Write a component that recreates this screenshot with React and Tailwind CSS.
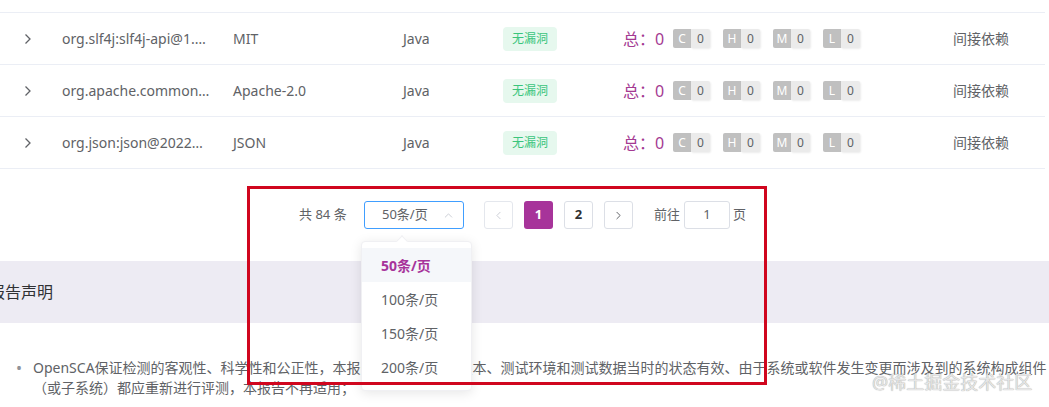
import { ChevronLeft, ChevronRight, ChevronUp } from 'lucide-react';

const rows = [
  { name: 'org.slf4j:slf4j-api@1.…', license: 'MIT' },
  { name: 'org.apache.common…', license: 'Apache-2.0' },
  { name: 'org.json:json@2022…', license: 'JSON' },
];

const sizes = ['50条/页', '100条/页', '150条/页', '200条/页'];

function RowChevron() {
  return (
    <svg width="8" height="12" viewBox="0 0 8 12" fill="none">
      <path d="M1.5 1.5 L6 6 L1.5 10.5" stroke="#606266" strokeWidth="1.3" />
    </svg>
  );
}

function SevBadge({ letter }) {
  return (
    <span className="flex h-[19px] items-center">
      <span className="flex h-full w-[18px] items-center justify-center rounded-l-[2px] bg-[#c0c0c0] text-[12px] text-white">
        {letter}
      </span>
      <span className="flex h-full w-[19px] items-center justify-center rounded-r-[2px] bg-[#ebebeb] text-[12px] text-[#606266] shadow-[1px_1px_2px_rgba(0,0,0,0.08)]">
        0
      </span>
    </span>
  );
}

export default function App() {
  return (
    <div className="relative h-[407px] w-[1049px] overflow-hidden bg-white font-['Noto_Sans','Noto_Sans_CJK_SC',sans-serif] text-[#606266]">
      {/* table rows */}
      <div className="mt-[12px] w-[1045px] border-t border-[#ebeef5]">
        {rows.map((r) => (
          <div key={r.name} className="flex h-[52px] items-center border-b border-[#ebeef5] text-[14px]">
            <div className="w-[62px] pl-[24px]">
              <RowChevron />
            </div>
            <div className="w-[171px] whitespace-nowrap">{r.name}</div>
            <div className="w-[170px]">{r.license}</div>
            <div className="w-[100px]">Java</div>
            <div className="w-[120px]">
              <span className="flex h-[24px] w-[54px] items-center justify-center rounded-[4px] bg-[#e6f8ee] text-[12px] text-[#3ac57c]">
                无漏洞
              </span>
            </div>
            <div className="flex w-[330px] items-center">
              <span className="w-[50px] text-[16px] text-[#a43a92]">总：0</span>
              <div className="flex items-center gap-[13px]">
                <SevBadge letter="C" />
                <SevBadge letter="H" />
                <SevBadge letter="M" />
                <SevBadge letter="L" />
              </div>
            </div>
            <div>间接依赖</div>
          </div>
        ))}
      </div>

      {/* pagination */}
      <div className="mt-[32px] flex h-[28px] items-center pl-[299px] text-[13px]">
        <span className="w-[65px]">共 84 条</span>
        <div className="flex h-[28px] w-[100px] items-center justify-between rounded-[3px] border border-[#409eff] pl-[17px] pr-[8px] text-[13px]">
          <span>50条/页</span>
          <ChevronUp size={13} color="#c0c4cc" strokeWidth={1.5} />
        </div>
        <div className="ml-[20px] flex items-center gap-[11px]">
          <div className="flex h-[28px] w-[29px] items-center justify-center rounded-[3px] border border-[#e4e7ed]">
            <ChevronLeft size={13} color="#c0c4cc" strokeWidth={1.5} />
          </div>
          <div className="flex h-[28px] w-[29px] items-center justify-center rounded-[3px] bg-[#a7349a] font-bold text-white">
            1
          </div>
          <div className="flex h-[28px] w-[29px] items-center justify-center rounded-[3px] border border-[#dcdfe6] font-bold text-[#303133]">
            2
          </div>
          <div className="flex h-[28px] w-[29px] items-center justify-center rounded-[3px] border border-[#dcdfe6]">
            <ChevronRight size={13} color="#606266" strokeWidth={1.8} />
          </div>
        </div>
        <span className="ml-[21px]">前往</span>
        <div className="ml-[4px] flex h-[28px] w-[46px] items-center justify-center rounded-[3px] border border-[#dcdfe6]">
          1
        </div>
        <span className="ml-[3px]">页</span>
      </div>

      {/* statement header */}
      <div className="mt-[32px] flex h-[62px] items-center bg-[#edebf3]">
        <span className="ml-[-11px] text-[16px] text-[#303133]">报告声明</span>
      </div>

      {/* statement list */}
      <div className="mt-[35px] flex text-[14px] leading-[20px]">
        <span className="w-[33px] pl-[16px] text-[16px] text-[#909399]">•</span>
        <div className="whitespace-nowrap">
          OpenSCA保证检测的客观性、科学性和公正性，本报告仅对检测时的版本、测试环境和测试数据当时的状态有效、由于系统或软件发生变更而涉及到的系统构成组件
          <br />
          （或子系统）都应重新进行评测，本报告不再适用；
        </div>
      </div>

      {/* size dropdown */}
      <div className="absolute left-[361px] top-[241px] w-[111px] rounded-[4px] border border-[#f0f0f3] bg-white py-[6px] shadow-[0_2px_12px_rgba(0,0,0,0.1)]">
        <div className="absolute left-[36px] top-[-5px] h-[8px] w-[8px] rotate-45 border-l border-t border-[#f0f0f3] bg-white" />
        {sizes.map((s, i) => (
          <div
            key={s}
            className={
              i === 0
                ? 'flex h-[34px] items-center bg-[#f5f7fa] pl-[19px] text-[14px] font-bold text-[#a7349a]'
                : 'flex h-[34px] items-center pl-[19px] text-[14px] text-[#606266]'
            }
          >
            {s}
          </div>
        ))}
      </div>

      {/* red annotation frame */}
      <div className="absolute left-[247px] top-[186px] h-[199px] w-[520px] border-[3px] border-[#d0061e]" />

      {/* watermark */}
      <div className="absolute left-[872px] top-[369px] text-[18px] text-[#e6e6e6] [text-shadow:0_0_1px_rgba(0,0,0,0.45)]">
        @稀土掘金技术社区
      </div>
    </div>
  );
}
